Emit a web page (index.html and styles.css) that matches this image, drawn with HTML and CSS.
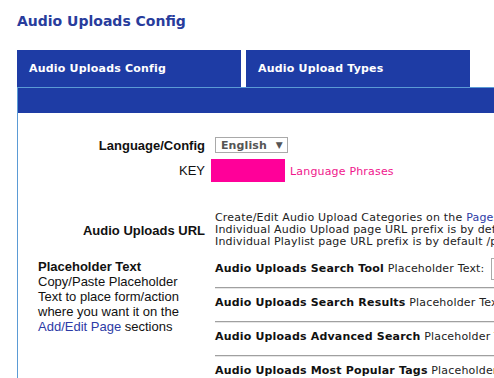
FILE: index.html
```html
<!DOCTYPE html>
<html>
<head>
<meta charset="utf-8">
<link rel="stylesheet" href="styles.css">
</head>
<body>
<div class="page">
  <h1 class="title">Audio Uploads Config</h1>
  <div class="tabs">
    <div class="tab">Audio Uploads Config</div>
    <div class="tab">Audio Upload Types</div>
  </div>
  <div class="panel">
    <div class="panel-bar"></div>
    <div class="content">
      <div class="row row-lang">
        <div class="lbl">Language/Config</div>
        <div class="val">
          <span class="select">English <span class="arrow">▼</span></span>
        </div>
      </div>
      <div class="row row-key">
        <div class="lbl lbl-normal">KEY</div>
        <div class="val">
          <span class="keybox"></span>
          <a class="phrases">Language Phrases</a>
        </div>
      </div>
      <div class="row row-url">
        <div class="lbl">Audio Uploads URL</div>
        <div class="val url-text">
          <div>Create/Edit Audio Upload Categories on the <a class="link">Pages</a> screen</div>
          <div>Individual Audio Upload page URL prefix is by default /audio-uploads/</div>
          <div>Individual Playlist page URL prefix is by default /playlist/</div>
        </div>
      </div>
      <div class="row row-ph">
        <div class="ph-left">
          <div class="ph-title">Placeholder Text</div>
          <div>Copy/Paste Placeholder Text to place form/action where you want it on the <a class="link">Add/Edit Page</a> sections</div>
        </div>
        <div class="val ph-list">
          <div class="ph-item"><b>Audio Uploads Search Tool</b> Placeholder Text: <span class="ph-input">#AUDIO_UPLOADS_SEARCH_TOOL#</span></div>
          <hr class="sep">
          <div class="ph-item"><b>Audio Uploads Search Results</b> Placeholder Text: <span class="ph-input">#AUDIO_UPLOADS_SEARCH_RESULTS#</span></div>
          <hr class="sep">
          <div class="ph-item"><b>Audio Uploads Advanced Search</b> Placeholder Text: <span class="ph-input">#AUDIO_UPLOADS_ADVANCED_SEARCH#</span></div>
          <hr class="sep">
          <div class="ph-item"><b>Audio Uploads Most Popular Tags</b> Placeholder Text: <span class="ph-input">#AUDIO_UPLOADS_TAGS#</span></div>
          <hr class="sep">
        </div>
      </div>
    </div>
  </div>
</div>
</body>
</html>
```

FILE: styles.css
```css
html, body {
  margin: 0;
  padding: 0;
  background: #ffffff;
  overflow: hidden;
}
body {
  font-family: "DejaVu Sans", Verdana, sans-serif;
  color: #222222;
}
.page {
  width: 1100px;
  padding-left: 17px;
}
.title {
  margin: 0;
  padding-top: 12px;
  font-size: 14px;
  line-height: 19px;
  font-weight: bold;
  color: #283c9c;
}
.tabs {
  margin-top: 19px;
  display: flex;
  gap: 5px;
}
.tab {
  width: 224px;
  height: 37px;
  box-sizing: border-box;
  padding-left: 12px;
  display: flex;
  align-items: center;
  background: #1e3ca5;
  color: #ffffff;
  font-weight: bold;
  font-size: 11px;
  letter-spacing: 0.2px;
}
.panel {
  border-top: 1px solid #5b9bd5;
  border-left: 1px solid #5b9bd5;
}
.panel-bar {
  height: 25px;
  background: #1e3ca5;
}
.content {
  padding-top: 23px;
  padding-bottom: 40px;
}
.row {
  display: flex;
  align-items: center;
}
.lbl {
  width: 193px;
  box-sizing: border-box;
  padding-right: 6px;
  text-align: right;
  font-family: "Liberation Sans", Arial, sans-serif;
  font-weight: bold;
  font-size: 13px;
  color: #111111;
  flex: none;
}
.lbl-normal {
  font-weight: normal;
}
.val {
  flex: none;
  font-size: 11px;
  letter-spacing: 0.18px;
}
.row-lang {
  height: 18px;
}
.select {
  margin-left: 4px;
  display: inline-flex;
  align-items: center;
  width: 73px;
  height: 16px;
  box-sizing: border-box;
  border: 1px solid #a9a9a9;
  padding-left: 5px;
  font-weight: bold;
  font-size: 11px;
  letter-spacing: 0.1px;
  color: #555555;
}
.arrow {
  margin-left: 9px;
  font-size: 9px;
}
.row-key {
  margin-top: 5px;
  height: 23px;
}
.row-key .val {
  display: flex;
  align-items: center;
}
.keybox {
  display: inline-block;
  width: 74px;
  height: 23px;
  background: #ff0099;
}
.phrases {
  margin-left: 5px;
  color: #f0168c;
  font-size: 11px;
  padding-top: 2px;
}
.row-url {
  margin-top: 30px;
}
.url-text {
  padding-left: 4px;
  line-height: 12px;
  white-space: nowrap;
}
.link {
  color: #2d3ba6;
}
.row-ph {
  margin-top: 9px;
  align-items: flex-start;
}
.ph-left {
  width: 193px;
  box-sizing: border-box;
  padding: 2px 20px 0 20px;
  flex: none;
  font-family: "Liberation Sans", Arial, sans-serif;
  font-size: 13px;
  line-height: 15px;
  color: #111111;
}
.ph-title {
  font-weight: bold;
}
.ph-list {
  padding-left: 4px;
  width: 800px;
}
.ph-item {
  height: 24px;
  display: flex;
  align-items: center;
  line-height: 12px;
  white-space: pre;
  color: #222222;
}
.ph-item b {
  color: #111111;
}
.ph-input {
  margin-left: 3px;
  height: 22px;
  box-sizing: border-box;
  border: 1px solid #a9a9a9;
  padding: 0 2px;
  display: inline-flex;
  align-items: center;
}
.sep {
  margin: 6px 0 2px 0;
  height: 0;
  border: none;
  border-top: 1px solid #a0a0a0;
  border-bottom: 1px solid #e6e6e6;
}
```
